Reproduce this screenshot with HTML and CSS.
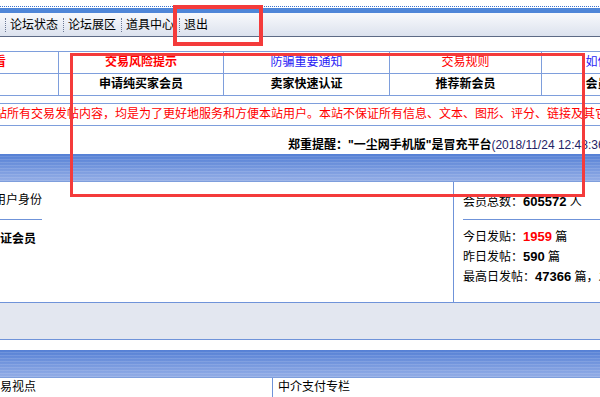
FILE: index.html
```html
<!DOCTYPE html>
<html lang="zh-CN">
<head>
    <meta charset="UTF-8">
    <meta name="viewport" content="width=device-width, initial-scale=1.0">
    <title>论坛首页</title>
    <link rel="stylesheet" href="styles.css">
</head>
<body>
    <div class="page">
        <div class="top-line"></div>
        <div class="top-bar"></div>

        <div class="nav">
            <span class="nav-item">个人空间</span>
            <span class="nav-item">论坛状态</span>
            <span class="nav-item">论坛展区</span>
            <span class="nav-item">道具中心</span>
            <span class="nav-item">退出</span>
        </div>

        <table class="links">
            <colgroup>
                <col style="width: 165px">
                <col style="width: 165px">
                <col style="width: 166px">
                <col style="width: 152px">
                <col style="width: 160px">
                <col style="width: 182px">
            </colgroup>
            <tr>
                <td class="red bold">新会员必看</td>
                <td class="red bold">交易风险提示</td>
                <td class="blue">防骗重要通知</td>
                <td class="red">交易规则</td>
                <td class="blue">如何安全交易</td>
                <td class="red">版主招聘</td>
            </tr>
            <tr class="bold">
                <td></td>
                <td>申请纯买家会员</td>
                <td>卖家快速认证</td>
                <td>推荐新会员</td>
                <td>会员等级说明</td>
                <td>联系管理员</td>
            </tr>
        </table>

        <div class="disclaimer">声明：本站所有交易发帖内容，均是为了更好地服务和方便本站用户。本站不保证所有信息、文本、图形、评分、链接及其它项目的绝对准确性和完整性，故仅供访问者参照使用。</div>

        <div class="notice"><b>郑重提醒："一尘网手机版"是冒充平台</b><span class="date">(2018/11/24 12:48:36)</span></div>

        <div class="box">
            <div class="box-head"></div>
            <div class="box-body">
                <div class="user-box">
                    <div class="user-label">当前用户身份</div>
                    <div class="user-value">已认证会员</div>
                </div>
                <div class="box-middle"></div>
                <div class="stats">
                    <div class="stats-total">会员总数：<b>605572</b> 人</div>
                    <ul class="stats-list">
                        <li>今日发贴：<b class="hot">1959</b> 篇</li>
                        <li>昨日发帖：<b>590</b> 篇</li>
                        <li>最高日发帖：<b>47366</b> 篇，发生在 2010-05-12</li>
                    </ul>
                </div>
            </div>
            <div class="box-foot"></div>
        </div>

        <div class="box box-second">
            <div class="box-head"></div>
            <div class="columns">
                <div class="column column-left">交易视点</div>
                <div class="column">中介支付专栏</div>
            </div>
        </div>
    </div>

    <!-- red marks drawn over the screenshot -->
    <div class="mark mark-exit"></div>
    <div class="mark mark-links"></div>
</body>
</html>
```

FILE: styles.css
```css
body {
    margin: 0;
    overflow: hidden;
    background-color: #fff;
    color: #000;
    font: 12px "Liberation Sans", "Noto Sans CJK SC", sans-serif;
}

.page {
    width: 1000px;
    margin-left: -107px;
}

.top-line {
    height: 6px;
    border-bottom: 1px dotted #3d73cf;
}

.top-bar {
    height: 5px;
    margin-top: 1px;
    background-color: #4f86d8;
}

.nav {
    display: flex;
    align-items: center;
    height: 22px;
    padding-top: 1px;
    padding-left: 54px;
    background: linear-gradient(#f8f9fc, #dce2ee);
    border-bottom: 1px solid #5d6a85;
}

.nav-item {
    line-height: 14px;
    padding: 0 5px 0 4px;
    border-left: 1px dotted #6b7895;
    white-space: nowrap;
}

.links {
    margin-top: 14px;
    width: 990px;
    border-collapse: collapse;
    table-layout: fixed;
}

.links td {
    padding: 0;
    line-height: 21px;
    border: 1px solid #7e9edc;
    text-align: center;
    white-space: nowrap;
    overflow: hidden;
}

.bold {
    font-weight: bold;
}

.red {
    color: #ff0000;
}

.blue {
    color: #2a1cf5;
}

.disclaimer {
    margin-top: 7px;
    padding-left: 54px;
    line-height: 21px;
    color: #ff0000;
    border-top: 1px solid #7e9edc;
    border-bottom: 1px solid #7e9edc;
    white-space: nowrap;
    overflow: hidden;
}

.notice {
    padding-top: 10px;
    padding-left: 395px;
    line-height: 18px;
    white-space: nowrap;
}

.notice .date {
    color: #1f2366;
}

.box-head {
    height: 27px;
    border-bottom: 1px solid #7e9edc;
    background:
        repeating-linear-gradient(to bottom, rgba(255, 255, 255, 0) 0 2px, rgba(255, 255, 255, 0.12) 2px 3px),
        linear-gradient(#5580d5, #93ade6);
}

.box-body {
    display: flex;
    height: 120px;
}

.user-box {
    width: 226px;
    text-align: center;
}

.user-label {
    display: inline-block;
    margin-top: 7px;
    padding-bottom: 8px;
    line-height: 22px;
    border-bottom: 1px solid #6f93d9;
}

.user-value {
    margin-top: 8px;
    line-height: 22px;
    font-weight: bold;
}

.box-middle {
    width: 334px;
}

.stats {
    flex: 1;
    padding: 10px 9px 0;
    border-left: 1px solid #6f93d9;
    white-space: nowrap;
}

.stats b {
    font-size: 13px;
}

.stats .hot {
    color: #ff0000;
}

.stats-total {
    line-height: 20px;
    padding-bottom: 7px;
    border-bottom: 1px solid #6f93d9;
}

.stats-list {
    list-style: none;
    margin: 7px 0 0;
    padding: 0;
}

.stats-list li {
    line-height: 20px;
}

.box-foot {
    height: 36px;
    background-color: #e3e7f0;
    border-top: 1px solid #6f93d9;
    border-bottom: 1px solid #6f93d9;
}

.box-second {
    margin-top: 10px;
}

.columns {
    display: flex;
}

.column {
    line-height: 19px;
    padding-left: 5px;
    white-space: nowrap;
}

.column-left {
    box-sizing: border-box;
    width: 380px;
    padding-left: 95px;
    border-right: 1px solid #6f93d9;
}

.mark {
    position: absolute;
    box-sizing: border-box;
    border: 3px solid #f43b3b;
}

.mark-exit {
    left: 173px;
    top: 5px;
    width: 90px;
    height: 41px;
    border-width: 4px;
}

.mark-links {
    left: 70px;
    top: 53px;
    width: 515px;
    height: 144px;
}
```
